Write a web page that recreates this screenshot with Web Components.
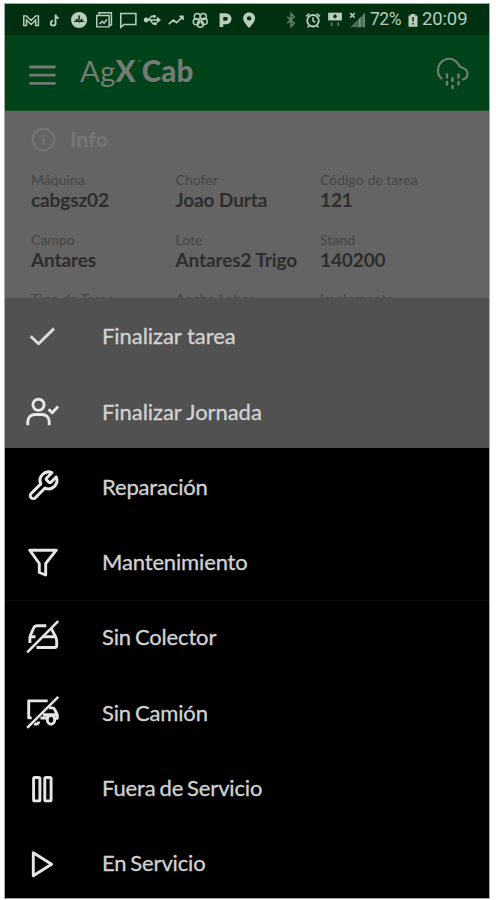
<!DOCTYPE html>
<html lang="es">
<head>
<meta charset="utf-8">
<title>AgX Cab</title>
<style>
    body {
        margin: 0;
        padding: 4px 7px 2px 5px;
        height: 894px;
        background: #fff;
        font-family: Lato, "Liberation Sans", sans-serif;
    }
</style>
</head>
<body>
<cab-screen>
    <status-bar battery="72%" time="20:09"></status-bar>
    <cab-header>
        <span>Ag</span><b slot="strong">X</b><b slot="end">Cab</b>
    </cab-header>
    <info-panel heading="Info">
        <info-field label="Máquina">cabgsz02</info-field>
        <info-field label="Chofer">Joao Durta</info-field>
        <info-field label="Código de tarea">121</info-field>
        <info-field label="Campo">Antares</info-field>
        <info-field label="Lote">Antares2 Trigo</info-field>
        <info-field label="Stand">140200</info-field>
        <info-field label="Tipo de Tarea"></info-field>
        <info-field label="Ancho Labor"></info-field>
        <info-field label="Implemento"></info-field>
    </info-panel>
    <action-sheet>
        <action-item icon="check" raised>Finalizar tarea</action-item>
        <action-item icon="user" raised>Finalizar Jornada</action-item>
        <action-item icon="wrench">Reparación</action-item>
        <action-item icon="funnel">Mantenimiento</action-item>
        <action-item icon="car" divider>Sin Colector</action-item>
        <action-item icon="truck">Sin Camión</action-item>
        <action-item icon="pause">Fuera de Servicio</action-item>
        <action-item icon="play">En Servicio</action-item>
    </action-sheet>
</cab-screen>

<script>
const icons = {
    check: '<path d="M8.7 19.2l7.8 7.6L32 11.6" stroke="#dcdcdc"/>',
    user: '<circle cx="16.5" cy="12.8" r="5.6"/><path d="M5.8 33.2v-3.700a7 7 0 0 1 7-7h7.400a7 7 0 0 1 7 7v3.700M26.600 17.200l3.500 3.500 6-6.200"/>',
    wrench: '<path transform="translate(4.1 1.2) scale(1.4)" stroke-width="2.150" d="M14.7 6.3a1 1 0 0 0 0 1.4l1.6 1.6a1 1 0 0 0 1.4 0l3.77-3.77a6 6 0 0 1-7.94 7.94l-6.91 6.91a2.12 2.12 0 0 1-3-3l6.91-6.91a6 6 0 0 1 7.94-7.94z"/>',
    funnel: '<path d="M7.7 7.2H34.3L23.7 20.5V32L17.3 29.5V20.5Z"/>',
    car: '<path d="M24.3 7.7H14.8c-1.4 0-2.300.6-2.900 1.800L8.600 17c-.5 1-.7 2-.7 3v5M8 18.800h5.500M20 18.800h13.800M29.200 10.400l4.200 8c.8 1.500 1.300 3 1.300 4.800v4.300a2 2 0 0 1-2 2H14.500"/><path stroke-width="2.500" d="M5.200 34.300L36.200 3.200"/>',
    truck: '<path d="M25.700 6.900H6.700v17h3M27 13.900h3.200c1.200 0 2 .5 2.500 1.600l2.600 5.300v3.500h-2.600M18.500 24H25M21 20.800h13.500M12.300 29.500c1.800 1.300 4.400.4 4.400-2"/><ellipse cx="29" cy="25.800" rx="3.700" ry="4.400"/><path stroke-width="2.500" d="M5.200 33.900L36.200 2.800"/>',
    pause: '<rect x="11.600" y="8.500" width="6.300" height="23.400" rx="1.200"/><rect x="22.800" y="8.500" width="6.300" height="23.400" rx="1.200"/>',
    play: '<path d="M11.300 8.800V31.700L29.600 20.200Z"/>'
}

// notification glyphs, drawn on a 24px box
const notices = [
    '<path d="M4 18V7.500h3l5 5 5-5h3V18h-3v-6l-5 5-5-5v6z"/>',
    '<path d="M12.500 6v9.500a2.600 2.600 0 1 1-2.600-2.600M12.500 6.500c.4 2 1.600 3.300 3.500 3.500" stroke-width="2"/>',
    '<circle cx="12" cy="12" r="8.800" fill="currentColor" stroke="none"/><path d="M12 7v5M6.500 13.500h11M8.500 11l3.500 3 3.500-3" stroke="#00300f"/>',
    '<path d="M6.500 6V4H20v13.500h-2.500M4 7h13.500v12.500H4zM7 16.500l3-3 2 2 3-4"/>',
    '<path d="M4 5h16.500v12H7.500L4 20z" stroke-width="1.700"/>',
    '<path d="M4 12h16M8 12l3.500-4H14M10 12l3 4h2.500"/><circle cx="5.500" cy="12" r="1.800" fill="currentColor"/><circle cx="14.500" cy="8" r="1"/><circle cx="15.500" cy="16" r="1"/><path d="M18 10l2.500 2-2.500 2z" fill="currentColor"/>',
    '<path d="M4 16.500l5-4.500 3.500 3 7-7M15.500 8h4v4" stroke-width="1.800"/>',
    '<circle cx="9" cy="8.200" r="3.300"/><circle cx="15.500" cy="8.200" r="3.300"/><circle cx="7.800" cy="14" r="3.300"/><circle cx="12.300" cy="16.500" r="3.300"/><circle cx="16.500" cy="13.500" r="3.300"/>',
    '<path d="M8 19.500V6.700h5a4 4 0 0 1 0 8H10" stroke-width="4"/>',
    '<path d="M12 3.500a6.600 6.600 0 0 0-6.600 6.600c0 4.300 6.600 10.600 6.600 10.600s6.600-6.300 6.600-10.600A6.600 6.600 0 0 0 12 3.500zm0 4.300a2.400 2.400 0 1 1 0 4.800 2.400 2.400 0 0 1 0-4.800z" fill="currentColor" stroke="none"/>'
]

const system = [
    '<path d="M8 8.500l7.500 7-3.500 3.500V5l3.500 3.500-7.500 7" opacity=".55"/>',
    '<circle cx="12" cy="12.800" r="6.300" stroke-width="2"/><path d="M12 9v4l2.500 1.500M4.500 8l3.500-3M19.500 8L16 5M7.500 18.500L6 20M16.500 18.500L18 20" stroke-width="1.700"/>',
    '<path d="M4.500 4h15v8.500h-15z" fill="currentColor" stroke="none"/><path d="M12 6v4M10 8h4" stroke="#00300f" stroke-width="2"/><path d="M8.500 14.500v4M15.500 14.500v4" opacity=".55"/>',
    '<path d="M20 5v15H4.500z" fill="currentColor" stroke="none" opacity=".4"/><path d="M20 5v15M15 10v10" opacity=".5"/><path d="M4.500 4.500l5 5M9.500 4.500l-5 5"/>'
]

const glyph = (body, cls = '') => `<svg class="${cls}" viewBox="0 0 24 24">${body}</svg>`

class CabScreen extends HTMLElement {
    constructor() {
        super()
        this.attachShadow({ mode: 'open' })
        this.shadowRoot.innerHTML = `
            <style>
                :host {
                    display: flex;
                    flex-direction: column;
                    box-sizing: border-box;
                    height: 894px;
                    overflow: hidden;
                    background: #000;
                    box-shadow: 0 0 0 1px #a5aaa6;
                }
            </style>
            <slot></slot>
        `
    }
}

class StatusBar extends HTMLElement {
    constructor() {
        super()
        this.attachShadow({ mode: 'open' })
    }

    connectedCallback() {
        this.shadowRoot.innerHTML = `
            <style>
                :host {
                    display: flex;
                    align-items: center;
                    flex: none;
                    height: 31px;
                    padding-left: 14px;
                    background: #00300f;
                    color: #b9cdbd;
                    font: 18px/31px Roboto, sans-serif;
                }
                svg {
                    flex: none;
                    width: 24.2px;
                    height: 22px;
                    fill: none;
                    stroke: currentColor;
                    stroke-width: 1.6;
                }
                .system {
                    display: flex;
                    align-items: center;
                    margin-left: 19px;
                }
                .system svg { width: 22px; }
                .level { width: 34px; margin-left: 2px; font-size: 17.5px; letter-spacing: -.4px; }
                .system svg.cell { width: 18px; }
                .time { font-size: 18.5px; letter-spacing: -.1px; }
            </style>
            ${notices.map(n => glyph(n)).join('')}
            <div class="system">
                ${system.map(n => glyph(n)).join('')}
                <span class="level">${this.getAttribute('battery')}</span>
                ${glyph('<path d="M9 4h6v2h3v15H6V6h3z" fill="currentColor" stroke="none"/><path d="M12 8v6M12 16v2" stroke="#00300f" stroke-width="2"/>', 'cell')}
                <span class="time">${this.getAttribute('time')}</span>
            </div>
        `
    }
}

class CabHeader extends HTMLElement {
    constructor() {
        super()
        this.attachShadow({ mode: 'open' })
        this.shadowRoot.innerHTML = `
            <style>
                :host {
                    display: flex;
                    align-items: center;
                    flex: none;
                    box-sizing: border-box;
                    height: 76px;
                    padding: 0 18px 0 22px;
                    background: #004219;
                    border-bottom: 1px solid #1d5429;
                    color: #737b73;
                }
                svg { fill: none; stroke: currentColor; stroke-linecap: round; }
                .menu { width: 32px; height: 24px; margin-top: 5px; }
                .title {
                    flex: 1;
                    display: flex;
                    align-items: baseline;
                    margin: 0 0 3px 21px;
                    font-size: 29.5px;
                    line-height: 36px;
                    letter-spacing: .1px;
                    white-space: nowrap;
                }
                ::slotted(b) { font-weight: 900; }
                .mark { align-self: flex-start; width: 6px; height: 3px; padding-top: 7px; }
                .mark::before {
                    content: "";
                    display: block;
                    width: 3px;
                    height: 2px;
                    margin-left: 2px;
                    background: #355f3e;
                }
                .rain { width: 38px; height: 38px; stroke-width: 2.2; }
            </style>
            <svg class="menu" viewBox="0 0 32 24" stroke-width="2.800"><path d="M3.500 4h24M3.500 12.200h24M3.500 20.400h24"/></svg>
            <div class="title"><slot></slot><slot name="strong"></slot><i class="mark"></i><slot name="end"></slot></div>
            <svg class="rain" viewBox="0 0 38 38">
                <path d="M8.500 24.500A10.500 10.500 0 0 1 5 15.500a11 11 0 0 1 21-4.300c.8 1.700 1.500 2 3.500 2.500 6.500 2.300 6.600 9.700.5 11.800"/>
                <path d="M14 20.500v3M19.500 24v3M25.500 20.500v3M14 28v2.500M19.500 32v2M25.500 28v2.500" stroke-width="2.500"/>
            </svg>
        `
    }
}

class InfoPanel extends HTMLElement {
    constructor() {
        super()
        this.attachShadow({ mode: 'open' })
    }

    connectedCallback() {
        this.shadowRoot.innerHTML = `
            <style>
                :host {
                    display: block;
                    flex: none;
                    box-sizing: border-box;
                    height: 187px;
                    padding: 14px 0 0 26px;
                    overflow: hidden;
                    background: #646464;
                }
                header {
                    display: flex;
                    align-items: center;
                    gap: 14px;
                    height: 28px;
                    color: #757575;
                    font-size: 21.5px;
                    font-weight: 900;
                    line-height: 26px;
                }
                svg { width: 25px; height: 25px; fill: none; stroke: currentColor; stroke-width: 2; }
                .grid {
                    display: grid;
                    grid-template-columns: 144.500px 144.500px 1fr;
                    grid-auto-rows: 59.500px;
                    margin-top: 17px;
                }
            </style>
            <header>
                <svg viewBox="0 0 25 25"><circle cx="12.500" cy="12.500" r="10.800"/><path d="M12.500 8v1.500M12.500 11.500v6"/></svg>
                ${this.getAttribute('heading')}
            </header>
            <div class="grid"><slot></slot></div>
        `
    }
}

class InfoField extends HTMLElement {
    constructor() {
        super()
        this.attachShadow({ mode: 'open' })
    }

    connectedCallback() {
        this.shadowRoot.innerHTML = `
            <style>
                :host {
                    display: flex;
                    flex-direction: column;
                    white-space: nowrap;
                    color: #2d2d2d;
                    font-size: 19px;
                    font-weight: 700;
                    line-height: 22px;
                    letter-spacing: -.1px;
                }
                small {
                    color: #464646;
                    font-size: 14px;
                    font-weight: 400;
                    line-height: 19px;
                    letter-spacing: .05px;
                }
            </style>
            <small>${this.getAttribute('label')}</small>
            <span><slot></slot></span>
        `
    }
}

class ActionSheet extends HTMLElement {
    constructor() {
        super()
        this.attachShadow({ mode: 'open' })
        this.shadowRoot.innerHTML = `
            <style>
                :host {
                    display: flex;
                    flex-direction: column;
                    flex: 1;
                    padding-top: 1.400px;
                    background: linear-gradient(#515151 150px, #000 150px);
                }
            </style>
            <slot></slot>
        `
    }
}

class ActionItem extends HTMLElement {
    constructor() {
        super()
        this.attachShadow({ mode: 'open' })
    }

    connectedCallback() {
        this.shadowRoot.innerHTML = `
            <style>
                :host {
                    display: flex;
                    align-items: center;
                    flex: none;
                    gap: 40px;
                    height: 75.300px;
                    padding-left: 17px;
                    color: #d2d2d2;
                    font-size: 22px;
                    line-height: 28px;
                    letter-spacing: -.15px;
                    word-spacing: -1.5px;
                    white-space: nowrap;
                    -webkit-text-stroke: .3px currentColor;
                }
                :host([raised]) { letter-spacing: -.05px; word-spacing: 0; }
                :host([divider]) { box-shadow: 0 -1px #0d0d0d; }
                span { padding-bottom: 1.500px; }
                svg {
                    width: 40px;
                    height: 40px;
                    fill: none;
                    stroke: #e6e6e6;
                    stroke-width: 2.900;
                    stroke-linejoin: round;
                }
            </style>
            <svg viewBox="0 0 40 40">${icons[this.getAttribute('icon')]}</svg>
            <span><slot></slot></span>
        `
    }
}

customElements.define('cab-screen', CabScreen)
customElements.define('status-bar', StatusBar)
customElements.define('cab-header', CabHeader)
customElements.define('info-panel', InfoPanel)
customElements.define('info-field', InfoField)
customElements.define('action-sheet', ActionSheet)
customElements.define('action-item', ActionItem)
</script>
</body>
</html>
